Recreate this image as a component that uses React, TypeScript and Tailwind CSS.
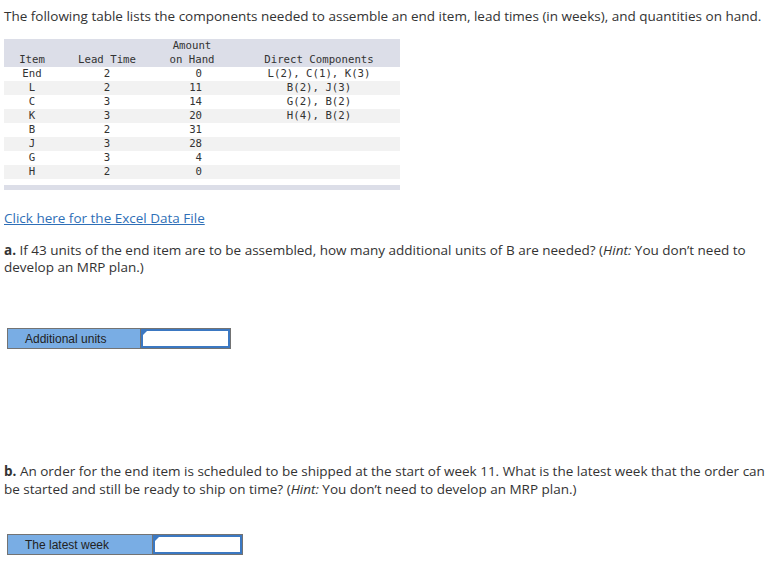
import React from "react";

const rows = [
  ["End", "2", "0", "L(2), C(1), K(3)"],
  ["L", "2", "11", "B(2), J(3)"],
  ["C", "3", "14", "G(2), B(2)"],
  ["K", "3", "20", "H(4), B(2)"],
  ["B", "2", "31", ""],
  ["J", "3", "28", ""],
  ["G", "3", "4", ""],
  ["H", "2", "0", ""],
];

function AnswerBox({ label, labelW, inputW }: { label: string; labelW: string; inputW: string }) {
  return (
    <div className="flex h-[21px] ml-[7px]" style={{ fontFamily: '"Liberation Sans", Arial, sans-serif' }}>
      <div className={`${labelW} h-full bg-[#79ade4] border border-[#737373] flex items-center pl-[17px] text-[12px] text-[#222]`}>
        {label}
      </div>
      <div className={`${inputW} h-full border border-[#737373] border-l-0 relative bg-white`}>
        <div className="absolute inset-0 border-2 border-[#3b78c2]" />
        <div className="absolute left-[2px] top-[2px] w-0 h-0 border-t-[4px] border-t-[#3b78c2] border-r-[4px] border-r-transparent" />
      </div>
    </div>
  );
}

export default function App() {
  return (
    <div className="bg-white w-[777px] h-[561px] text-[#333] text-[13.5px]" style={{ fontFamily: '"Open Sans", sans-serif' }}>
      <div className="pl-[4px] pt-[8px] leading-[17px] whitespace-nowrap">
        The following table lists the components needed to assemble an end item, lead times (in weeks), and quantities on hand.
      </div>
      <div className="ml-[4px] mt-[14px] w-[396px] text-[10.7px] text-[#333]" style={{ fontFamily: '"DejaVu Sans Mono", monospace' }}>
        <div className="grid grid-cols-[56px_94px_76px_170px] bg-[#dcdee8] h-[28px] items-end leading-[14px]">
          <div className="text-center">Item</div>
          <div className="text-center">Lead Time</div>
          <div className="text-center">Amount<br />on Hand</div>
          <div className="text-center pl-[8px]">Direct Components</div>
        </div>
        {rows.map((r, i) => (
          <div key={i} className={`grid grid-cols-[56px_94px_76px_170px] h-[14px] leading-[14px] ${i % 2 === 1 ? "bg-[#f2f2f2]" : "bg-white"}`}>
            <div className="text-center">{r[0]}</div>
            <div className="text-center">{r[1]}</div>
            <div className="text-right pr-[28px]">{r[2]}</div>
            <div className="text-center pl-[8px]">{r[3]}</div>
          </div>
        ))}
        <div className="h-[6px]" />
        <div className="h-[5px] bg-[#dcdee8]" />
      </div>
      <div className="pl-[4px] mt-[20px] leading-[17px]">
        <a href="#" className="text-[#2f6fb7] underline">Click here for the Excel Data File</a>
      </div>
      <div className="pl-[4px] pr-[8px] mt-[15px] leading-[17px]">
        <b>a.</b> If 43 units of the end item are to be assembled, how many additional units of B are needed? (<i>Hint:</i> You don’t need to develop an MRP plan.)
      </div>
      <div className="mt-[52px]">
        <AnswerBox label="Additional units" labelW="w-[134px]" inputW="w-[90px]" />
      </div>
      <div className="pl-[4px] pr-[8px] mt-[113px] leading-[18px]">
        <b>b.</b> An order for the end item is scheduled to be shipped at the start of week 11. What is the latest week that the order can be started and still be ready to ship on time? (<i>Hint:</i> You don’t need to develop an MRP plan.)
      </div>
      <div className="mt-[36px]">
        <AnswerBox label="The latest week" labelW="w-[146px]" inputW="w-[90px]" />
      </div>
    </div>
  );
}
